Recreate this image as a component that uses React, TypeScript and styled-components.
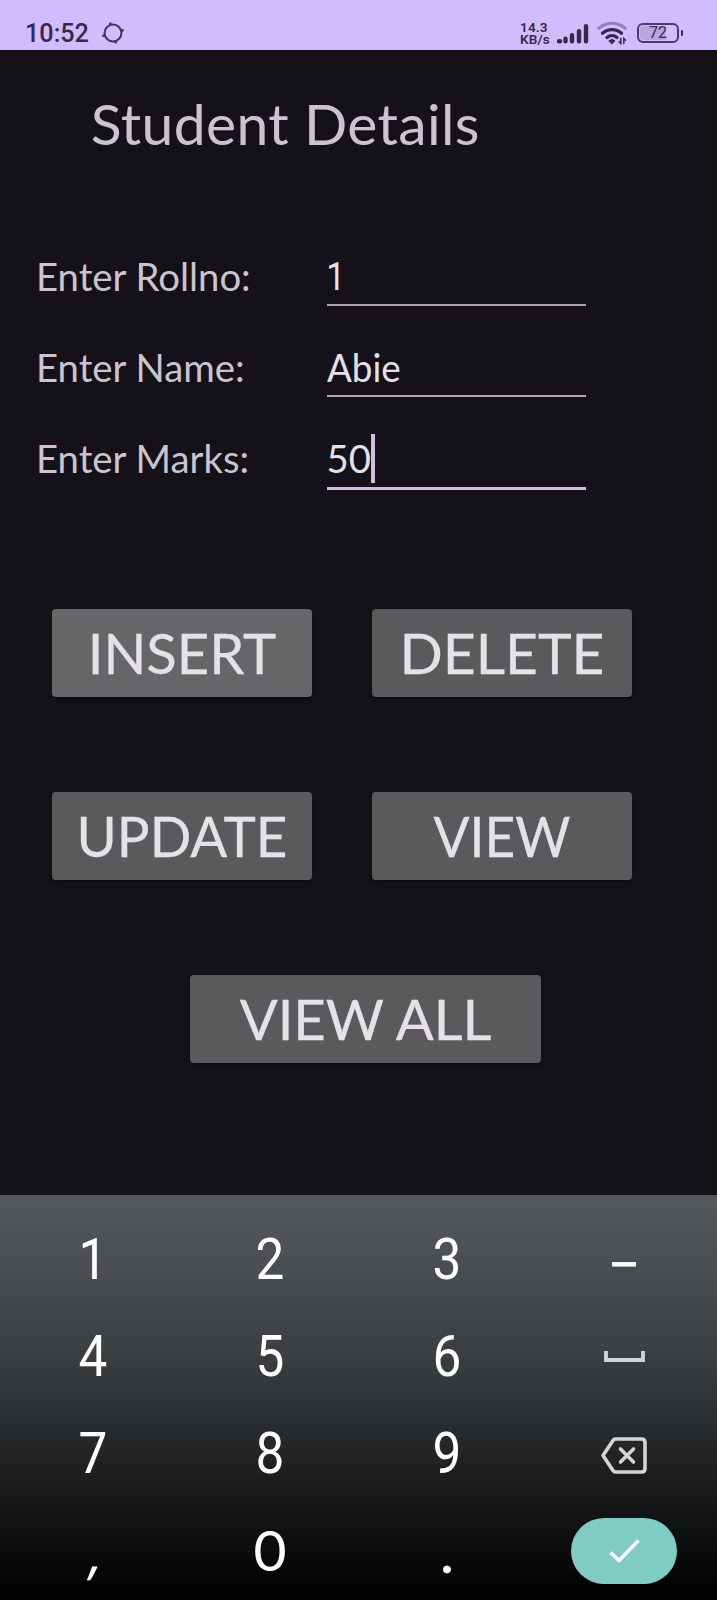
import React from "react";
import styled, { createGlobalStyle } from "styled-components";

const GlobalStyle = createGlobalStyle`
  *, *::before, *::after { box-sizing: border-box; }
  body { margin: 0; background: #141118; }
`;

const Screen = styled.div`
  width: 717px;
  height: 1600px;
  display: flex;
  flex-direction: column;
  overflow: hidden;
  background: #141118;
  font-family: Lato, sans-serif;
`;

const StatusBar = styled.header`
  height: 50px;
  flex: none;
  display: flex;
  align-items: flex-start;
  justify-content: space-between;
  padding: 20px 33px 0 25px;
  background: #d0bcff;
  color: #36294b;
`;

const StatusGroup = styled.div`
  display: flex;
  align-items: center;
  height: 26px;
`;

const Clock = styled.span`
  width: 77px;
  padding-top: 1px;
  font: 500 25.2px/26px Roboto, sans-serif;
`;

const NetSpeed = styled.span`
  width: 36px;
  font: 600 13.6px/12.5px Roboto, sans-serif;
  letter-spacing: 0.15px;
  white-space: pre;
`;

const StatusIcon = styled.svg<{ $gap?: number }>`
  display: block;
  flex: none;
  overflow: visible;
  margin-right: ${({ $gap = 0 }) => $gap}px;
`;

const Battery = styled.div`
  position: relative;
  width: 42px;
  height: 20px;
  border: 2px solid #4b3b69;
  border-radius: 6px;
  background: linear-gradient(90deg, #b8a6e0 70%, #d0bcff 70%);
  background-clip: content-box;
  padding: 1px;
  margin-right: 5px;
  font: 400 16px/16px Roboto, sans-serif;
  text-align: center;
  &::after {
    content: "";
    position: absolute;
    right: -6px;
    top: 5px;
    width: 2.5px;
    height: 6px;
    border-radius: 1px;
    background: #36294b;
  }
`;

const BatteryLevel = styled.span`
  display: block;
  margin-top: -1px;
`;

const Main = styled.main`
  height: 1145px;
  flex: none;
  color: #cac4d0;
`;

const Title = styled.h1`
  margin: 0;
  padding: 38px 0 0 90.8px;
  font-size: 57px;
  font-weight: 400;
  line-height: 71px;
  letter-spacing: 0.35px;
`;

const Form = styled.div`
  padding: 86px 0 0 36px;
`;

const FormRow = styled.label`
  display: flex;
  height: 91px;
  font-size: 38.3px;
  line-height: 62px;
`;

const LabelText = styled.span`
  width: 290.5px;
`;

const Field = styled.span<{ $active?: boolean }>`
  display: flex;
  width: 259.5px;
  height: ${({ $active }) => ($active ? 63 : 61)}px;
  border-bottom: ${({ $active }) => ($active ? "3px solid #c9c0dd" : "2px solid #aaa5b0")};
  color: #e6e1e9;
`;

const FieldText = styled.span<{ $scale?: number }>`
  transform: scaleX(${({ $scale = 1 }) => $scale});
  transform-origin: left;
`;

const FieldDigit = styled.span`
  padding-top: 1px;
  font-family: Roboto, sans-serif;
  transform: translateX(-2px) scaleX(0.88);
`;

const Caret = styled.span`
  width: 4px;
  height: 49px;
  margin: 7px 0 0 0.5px;
  background: #cbc2df;
`;

const Actions = styled.div`
  display: grid;
  grid-template-columns: 260px 260px;
  gap: 95px 60px;
  padding: 91px 0 0 52px;
  justify-items: center;
`;

const ActionButton = styled.button<{ $pressed?: boolean; $wide?: boolean }>`
  width: ${({ $wide }) => ($wide ? 351 : 260)}px;
  height: 88px;
  padding: 0 0 3px;
  border: 0;
  border-radius: 4px;
  background: ${({ $pressed }) => ($pressed ? "#666568" : "#5a595b")};
  color: #e6e1e9;
  font: 400 57px/84px Lato, sans-serif;
  -webkit-text-stroke: 0.3px #e6e1e9;
  white-space: nowrap;
  box-shadow: 0 2px 3px rgba(0, 0, 0, 0.35);
  ${({ $wide }) => $wide && "grid-column: 1 / -1; justify-self: start; margin-left: 138px;"}
`;

const ActionLabel = styled.span<{ $scale: number }>`
  display: block;
  transform: scaleX(${({ $scale }) => $scale});
`;

const Keyboard = styled.section`
  flex: 1;
  display: grid;
  grid-template-columns: repeat(4, 177px);
  grid-auto-rows: 97.3px;
  padding: 15.5px 0 0 4.5px;
  background: linear-gradient(
    #55585c 0,
    #494c50 20%,
    #3d4143 37%,
    #2d3133 53%,
    #1d1e1f 69%,
    #0c0d0d 86%,
    #000 100%
  );
`;

const Key = styled.div`
  display: flex;
  align-items: center;
  justify-content: center;
  color: #fff;
  font: 400 57px/97px Lato, sans-serif;
`;

const Digit = styled.span`
  font-family: Roboto, sans-serif;
  transform: scaleX(0.9);
`;

const Zero = styled.span`
  padding-bottom: 3px;
`;

const Dash = styled.span`
  -webkit-text-stroke: 0.8px #fff;
`;

const Period = styled.span`
  -webkit-text-stroke: 0.6px #fff;
`;

const Comma = styled.span`
  font-family: "Open Sans", sans-serif;
  transform: skewX(-10deg);
  transform-origin: 50% 70%;
`;

const EnterKey = styled.div`
  width: 106px;
  height: 66px;
  border-radius: 33px;
  background: #80cbc4;
  display: flex;
  align-items: center;
  justify-content: center;
`;

const KeyIcon = styled.svg`
  display: block;
  fill: none;
  overflow: visible;
`;

const RotationIcon = () => (
  <StatusIcon width="22" height="22" viewBox="0 0 22 22" fill="none" stroke="#43345c" strokeWidth="2">
    <circle cx="11" cy="11" r="8.4" />
    <path d="M8.800 3 8 .6M19 8.800l2.600-.8M13.200 19l.8 2.400M3 13.200l-2.600.8" strokeWidth="2.400" />
  </StatusIcon>
);

const SignalIcon = () => (
  <StatusIcon $gap={8} width="33" height="21" viewBox="0 0 33 21" stroke="#36294b" strokeWidth="4.4" strokeLinecap="round">
    <path d="M3 18.300h1M9.500 18.300v-2.500M16 18.300v-6M23 18.300v-10M30 18.300v-15" />
  </StatusIcon>
);

const WifiIcon = () => (
  <StatusIcon $gap={10} width="30" height="22" viewBox="0 0 30 22" fill="none" strokeLinecap="round">
    <path d="M1.700 6.500C9.500-.4 20.500-.4 28.300 6.500" stroke="#9481ba" strokeWidth="3" />
    <path d="M5.500 11.200c5.600-4.900 13.400-4.900 19 0M10 15.500c3-2.600 7-2.600 10 0" stroke="#36294b" strokeWidth="3.200" />
    <path d="M12 18.800a4.500 4.500 0 0 1 6 0l-3 3Z" fill="#36294b" stroke="#36294b" strokeWidth="1" />
    <path d="M23.800 16.500v5l-1.800-1.800M26.800 21.500v-5l1.800 1.800" stroke="#36294b" strokeWidth="1.500" />
  </StatusIcon>
);

const SpaceIcon = () => (
  <KeyIcon width="41" height="10" viewBox="0 0 41 10">
    <path d="M2 0v9h37V0" stroke="#d5d5d8" strokeWidth="3.800" />
  </KeyIcon>
);

const BackspaceIcon = () => (
  <KeyIcon width="46" height="34" viewBox="0 0 46 34" stroke="#d5d5d8" strokeWidth="3.600" strokeLinejoin="round" strokeLinecap="round">
    <path d="M14.500 2h26q3.500 0 3.500 3.500v26q0 3.500-3.500 3.500h-26q-1.500 0-2.500-1.500L2 18.500 12 3.500Q13 2 14.500 2Z" />
    <path d="m19.500 12 13 13m0-13-13 13" />
  </KeyIcon>
);

const CheckIcon = () => (
  <KeyIcon width="31" height="24" viewBox="0 0 31 24" stroke="#fff" strokeWidth="3.600">
    <path d="m1.500 13.500 8.500 8L29.500 1.500" />
  </KeyIcon>
);

export default function App() {
  return (
    <Screen>
      <GlobalStyle />
      <StatusBar>
        <StatusGroup>
          <Clock>10:52</Clock>
          <RotationIcon />
        </StatusGroup>
        <StatusGroup>
          <NetSpeed>{"14.3\nKB/s"}</NetSpeed>
          <SignalIcon />
          <WifiIcon />
          <Battery>
            <BatteryLevel>72</BatteryLevel>
          </Battery>
        </StatusGroup>
      </StatusBar>

      <Main>
        <Title>Student Details</Title>
        <Form>
          <FormRow>
            <LabelText>Enter Rollno:</LabelText>
            <Field>
              <FieldDigit>1</FieldDigit>
            </Field>
          </FormRow>
          <FormRow>
            <LabelText>Enter Name:</LabelText>
            <Field>
              <FieldText $scale={0.96}>Abie</FieldText>
            </Field>
          </FormRow>
          <FormRow>
            <LabelText>Enter Marks:</LabelText>
            <Field $active>
              <FieldText>50</FieldText>
              <Caret />
            </Field>
          </FormRow>
        </Form>
        <Actions>
          <ActionButton $pressed>
            <ActionLabel $scale={0.985}>INSERT</ActionLabel>
          </ActionButton>
          <ActionButton>
            <ActionLabel $scale={1}>DELETE</ActionLabel>
          </ActionButton>
          <ActionButton>
            <ActionLabel $scale={0.96}>UPDATE</ActionLabel>
          </ActionButton>
          <ActionButton>
            <ActionLabel $scale={0.935}>VIEW</ActionLabel>
          </ActionButton>
          <ActionButton $wide>
            <ActionLabel $scale={0.985}>VIEW ALL</ActionLabel>
          </ActionButton>
        </Actions>
      </Main>

      <Keyboard>
        <Key><Digit>1</Digit></Key>
        <Key><Digit>2</Digit></Key>
        <Key><Digit>3</Digit></Key>
        <Key><Dash>–</Dash></Key>
        <Key><Digit>4</Digit></Key>
        <Key><Digit>5</Digit></Key>
        <Key><Digit>6</Digit></Key>
        <Key><SpaceIcon /></Key>
        <Key><Digit>7</Digit></Key>
        <Key><Digit>8</Digit></Key>
        <Key><Digit>9</Digit></Key>
        <Key><BackspaceIcon /></Key>
        <Key><Comma>,</Comma></Key>
        <Key><Zero>0</Zero></Key>
        <Key><Period>.</Period></Key>
        <Key>
          <EnterKey>
            <CheckIcon />
          </EnterKey>
        </Key>
      </Keyboard>
    </Screen>
  );
}
